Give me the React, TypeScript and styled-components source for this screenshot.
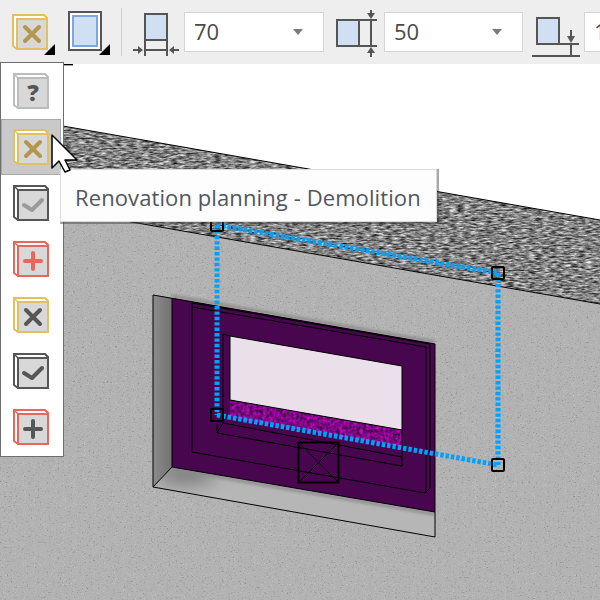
import * as React from 'react'
import styled, { createGlobalStyle } from 'styled-components'

const GlobalStyle = createGlobalStyle`
    html, body {
        margin: 0;
        padding: 0;
        background: #fff;
    }
`

const Page = styled.div`
    position: relative;
    display: flex;
    flex-direction: column;
    width: 600px;
    height: 600px;
    overflow: hidden;
    font-family: "Open Sans", "Noto Sans", sans-serif;
    color: #4a4a4a;
`

const Toolbar = styled.div`
    display: flex;
    align-items: center;
    flex: 0 0 64px;
    background: #eeeeee;
`

const Slot = styled.div<{ $w: number }>`
    position: relative;
    display: flex;
    flex: 0 0 ${(p) => p.$w}px;
    height: 64px;
    svg {
        display: block;
    }
`

const Separator = styled.div`
    flex: 0 0 1px;
    height: 48px;
    margin: 0 8px 0 9px;
    background: #cfcfcf;
`

const Corner = styled.span<{ $right: number }>`
    position: absolute;
    right: ${(p) => p.$right}px;
    bottom: 9px;
    width: 0;
    height: 0;
    border-style: solid;
    border-width: 0 0 11px 11px;
    border-color: transparent transparent #000 transparent;
`

const Select = styled.div<{ $w: number }>`
    display: flex;
    align-items: center;
    justify-content: space-between;
    box-sizing: border-box;
    flex: 0 0 ${(p) => p.$w}px;
    height: 40px;
    padding: 0 20px 3px 9px;
    background: #fff;
    border: 1px solid #d6d6d6;
    font-size: 22px;
`

const Caret = styled.span`
    width: 0;
    height: 0;
    margin-top: 3px;
    border-style: solid;
    border-width: 6px 5px 0 5px;
    border-color: #7a7a7a transparent transparent transparent;
`

const Scene = styled.div`
    flex: 1;
    svg {
        display: block;
    }
`

const Menu = styled.div`
    position: absolute;
    left: 0;
    top: 62px;
    box-sizing: border-box;
    width: 64px;
    height: 395px;
    padding-right: 2px;
    background: #fff;
    border: 1px solid #6e6e6e;
`

const MenuItem = styled.div<{ $active?: boolean }>`
    display: flex;
    align-items: center;
    justify-content: center;
    box-sizing: border-box;
    height: 56px;
    background: ${(p) => (p.$active ? '#c9c9c9' : 'transparent')};
    border: 1px solid ${(p) => (p.$active ? '#a9a9a9' : 'transparent')};
`

const Tooltip = styled.div`
    position: absolute;
    left: 60px;
    top: 169px;
    box-sizing: border-box;
    width: 377px;
    height: 53px;
    padding-left: 14px;
    line-height: 54px;
    font-size: 22px;
    letter-spacing: 0.1px;
    white-space: nowrap;
    color: #505660;
    background: #fdfdfd;
    border: 1px solid #dadada;
    box-shadow: 1px 1px 0 1px rgba(60, 60, 60, 0.45);
`

const Pointer = styled.svg`
    position: absolute;
    left: 50px;
    top: 133px;
`

type Glyph = 'question' | 'cross' | 'check' | 'plus'

const CubeIcon: React.FC<{ edge: string; ink: string; glyph: Glyph }> = ({ edge, ink, glyph }) => (
    <svg width="38" height="38" viewBox="0 0 38 38">
        <path d="M2 2H33L36 5V36H6L2 33Z" fill="#fff" stroke={edge} strokeWidth="2" />
        <path d="M6 6H36V36H6Z" fill="#d8d8d8" stroke={edge} strokeWidth="2" />
        <path d="M2 2L6 6M33 2L36 5" stroke={edge} strokeWidth="1.5" />
        {glyph === 'cross' && <path d="M14 14L28 28M28 14L14 28" stroke={ink} strokeWidth="4" strokeLinecap="round" />}
        {glyph === 'check' && <path d="M12 21L20 26L30 16" fill="none" stroke={ink} strokeWidth="4" strokeLinecap="round" strokeLinejoin="round" />}
        {glyph === 'plus' && <path d="M21 13V29M13 21H29" stroke={ink} strokeWidth="4" strokeLinecap="round" />}
        {glyph === 'question' && (
            <text x="21" y="29" textAnchor="middle" fontFamily="Open Sans, sans-serif" fontWeight="800" fontSize="23" fill={ink}>?</text>
        )}
    </svg>
)

const menuItems: { edge: string; ink: string; glyph: Glyph; active?: boolean }[] = [
    { edge: '#bcbcbc', ink: '#565656', glyph: 'question' },
    { edge: '#e3c05f', ink: '#b4964c', glyph: 'cross', active: true },
    { edge: '#565656', ink: '#9a9a9a', glyph: 'check' },
    { edge: '#e8675a', ink: '#e8675a', glyph: 'plus' },
    { edge: '#e3c05f', ink: '#565656', glyph: 'cross' },
    { edge: '#565656', ink: '#565656', glyph: 'check' },
    { edge: '#e8675a', ink: '#565656', glyph: 'plus' },
]

const Ink = '#555'
const Blue = '#d0dff2'

const handles = [
    [217, 225],
    [498, 273],
    [217, 415],
    [498, 465],
]

const WallScene: React.FC = () => (
    <svg width="600" height="536" viewBox="0 64 600 536">
        <defs>
            <filter id="plaster" x="0" y="0" width="100%" height="100%" colorInterpolationFilters="sRGB">
                <feTurbulence type="fractalNoise" baseFrequency="0.45 0.8" numOctaves="2" seed="4" />
                <feColorMatrix values="0 0 0 0 0.58  0 0 0 0 0.58  0 0 0 0 0.58  5 0 0 0 -3.1" result="dark" />
                <feComposite in="dark" in2="SourceGraphic" operator="in" result="speck" />
                <feTurbulence type="fractalNoise" baseFrequency="0.9" numOctaves="1" seed="12" />
                <feColorMatrix values="0 0 0 0 0.78  0 0 0 0 0.78  0 0 0 0 0.78  0 4 0 0 -2.3" result="light" />
                <feComposite in="light" in2="SourceGraphic" operator="in" result="fleck" />
                <feMerge>
                    <feMergeNode in="SourceGraphic" />
                    <feMergeNode in="speck" />
                    <feMergeNode in="fleck" />
                </feMerge>
            </filter>
            <filter id="rough" x="0" y="0" width="100%" height="100%" colorInterpolationFilters="sRGB">
                <feTurbulence type="fractalNoise" baseFrequency="0.14 0.6" numOctaves="3" seed="9" />
                <feColorMatrix values="1.2 0 0 0 -0.09  1.2 0 0 0 -0.09  1.2 0 0 0 -0.09  0 0 0 0 1" />
                <feComposite in2="SourceGraphic" operator="in" />
            </filter>
            <filter id="floorNoise" x="0" y="0" width="100%" height="100%" colorInterpolationFilters="sRGB">
                <feTurbulence type="fractalNoise" baseFrequency="0.3" numOctaves="2" seed="3" />
                <feColorMatrix values="0.9 0 0 0 0.05  0 0 0 0 0.03  0.9 0 0 0 0.07  0 0 0 0 1" />
                <feComposite in2="SourceGraphic" operator="in" />
            </filter>
            <filter id="soft" x="-20%" y="-20%" width="140%" height="140%">
                <feGaussianBlur stdDeviation="1.4" />
            </filter>
            <filter id="softer" x="-50%" y="-50%" width="200%" height="200%">
                <feGaussianBlur stdDeviation="9" />
            </filter>
            <linearGradient id="leftReveal" x1="0" x2="1" y1="0" y2="0">
                <stop offset="0" stopColor="#8c8c8c" />
                <stop offset="1" stopColor="#727272" />
            </linearGradient>
            <clipPath id="sillClip">
                <polygon points="153,487 172,467 435,512 435,537" />
            </clipPath>
        </defs>

        <path d="M64 64.6H73" stroke="#000" strokeWidth="1.5" />

        {/* wall top and face */}
        <polygon points="0,115 600,220 600,304 0,199" fill="#888" filter="url(#rough)" />
        <polygon points="0,199 600,304 600,600 0,600" fill="#b2b2b2" filter="url(#plaster)" />
        <path d="M0 115L600 220" stroke="#000" strokeWidth="1" />
        <path d="M0 199L600 304" stroke="#000" strokeWidth="1" />

        {/* opening */}
        <path d="M172 296L435 342" stroke="#8a8a8a" strokeWidth="3" filter="url(#soft)" />
        <polygon points="153,295 172,298 172,467 153,487" fill="url(#leftReveal)" />
        <polygon points="153,487 172,467 435,512 435,537" fill="#b6b6b6" />
        <g clipPath="url(#sillClip)">
            <ellipse cx="186" cy="474" rx="30" ry="10" fill="#777" filter="url(#softer)" />
            <path d="M172 469L435 514" stroke="#8a8a8a" strokeWidth="3" filter="url(#soft)" />
        </g>
        <polygon points="172,298 435,344 435,512 172,467" fill="#48064f" />
        <polygon points="230,336 402,366 402,430 230,400" fill="#eae0ea" />
        <polygon points="230,400 402,430 402,447 230,418" fill="#8a0a92" filter="url(#floorNoise)" />
        <g fill="none" stroke="#000" strokeWidth="1">
            <path d="M153 295L435 344V537L153 487Z" />
            <path d="M172 298V467L153 487M172 467L435 512" />
            <path d="M192 303L430 344V488L425 493L192 452Z" />
            <path d="M192 307L426 347V493" />
            <path d="M223 334L230 336L402 366V466L217 433V423" />
            <path d="M223 334V423L217 433M223 423L402 457" />
            <path d="M230 336V400L402 430" />
        </g>
        <rect x="298.5" y="442.5" width="40" height="40" fill="none" stroke="#000" strokeWidth="2" />
        <path d="M298.5 442.5L338.5 482.5M338.5 442.5L298.5 482.5" stroke="#000" strokeWidth="1" />

        {/* selection rectangle */}
        <g fill="none" stroke="#00a2ff" strokeWidth="5" strokeDasharray="3.4 2">
            <path d="M217 225L498 273" />
            <path d="M217 225V415" />
            <path d="M498 273V465" />
            <path d="M217 415L498 465" />
        </g>
        {handles.map(([x, y]) => (
            <rect key={`${x}-${y}`} x={x - 6} y={y - 6} width="12" height="12" rx="1" fill="none" stroke="#000" strokeWidth="2" />
        ))}
    </svg>
)

const App: React.FC = () => (
    <Page>
        <GlobalStyle />
        <Toolbar>
            <Slot $w={58}>
                <svg width="58" height="64" viewBox="0 0 58 64">
                    <g transform="translate(11 13)">
                        <path d="M2 2H33L36 5V36H6L2 33Z" fill="#fff" stroke="#e3c05f" strokeWidth="2" />
                        <path d="M6 6H36V36H6Z" fill="#d8d8d8" stroke="#e3c05f" strokeWidth="2" />
                        <path d="M14 14L28 28M28 14L14 28" stroke="#b4964c" strokeWidth="4" strokeLinecap="round" />
                    </g>
                </svg>
                <Corner $right={3} />
            </Slot>
            <Slot $w={54}>
                <svg width="54" height="64" viewBox="58 0 54 64">
                    <rect x="69" y="12" width="32" height="38" fill="#fff" stroke={Ink} strokeWidth="2" />
                    <rect x="73" y="16" width="24" height="30" fill={Blue} stroke="#7ea6e0" strokeWidth="2" />
                </svg>
                <Corner $right={2} />
            </Slot>
            <Separator />
            <Slot $w={54}>
                <svg width="54" height="64" viewBox="130 0 54 64">
                    <rect x="145" y="14" width="22" height="26" fill={Blue} stroke={Ink} strokeWidth="2" />
                    <path d="M145 40V56M167 40V56M145 50H167M133 50H140M172 50H179" fill="none" stroke={Ink} strokeWidth="2" />
                    <path d="M143 50L138 46V54ZM169 50L174 46V54Z" fill={Ink} />
                </svg>
            </Slot>
            <Select $w={140}>
                70
                <Caret />
            </Select>
            <Slot $w={60}>
                <svg width="60" height="64" viewBox="324 0 60 64">
                    <rect x="337" y="20" width="22" height="26" fill={Blue} stroke={Ink} strokeWidth="2" />
                    <path d="M359 20H377M359 46H377M371 20V46M371 10V15M371 52V57" fill="none" stroke={Ink} strokeWidth="2" />
                    <path d="M371 19L367 13H375ZM371 47L367 53H375Z" fill={Ink} />
                </svg>
            </Slot>
            <Select $w={139}>
                50
                <Caret />
            </Select>
            <Slot $w={61}>
                <svg width="61" height="64" viewBox="523 0 61 64">
                    <rect x="537" y="18" width="22" height="26" fill={Blue} stroke={Ink} strokeWidth="2" />
                    <path d="M559 44H579M571 44V55M532 56H580M571 30V38" fill="none" stroke={Ink} strokeWidth="2" />
                    <path d="M571 43L567 36H575Z" fill={Ink} />
                </svg>
            </Slot>
            <Select $w={140}>
                100
                <Caret />
            </Select>
        </Toolbar>
        <Scene>
            <WallScene />
        </Scene>
        <Menu>
            {menuItems.map((item) => (
                <MenuItem key={`${item.edge}-${item.ink}-${item.glyph}`} $active={item.active}>
                    <CubeIcon edge={item.edge} ink={item.ink} glyph={item.glyph} />
                </MenuItem>
            ))}
        </Menu>
        <Tooltip>Renovation planning - Demolition</Tooltip>
        <Pointer width="30" height="42" viewBox="50 133 30 42">
            <path d="M52 135L77 160H65L70 170L65 172L59 161L52 168Z" fill="#fff" stroke="#000" strokeWidth="1.5" strokeLinejoin="round" />
        </Pointer>
    </Page>
)

export default App
